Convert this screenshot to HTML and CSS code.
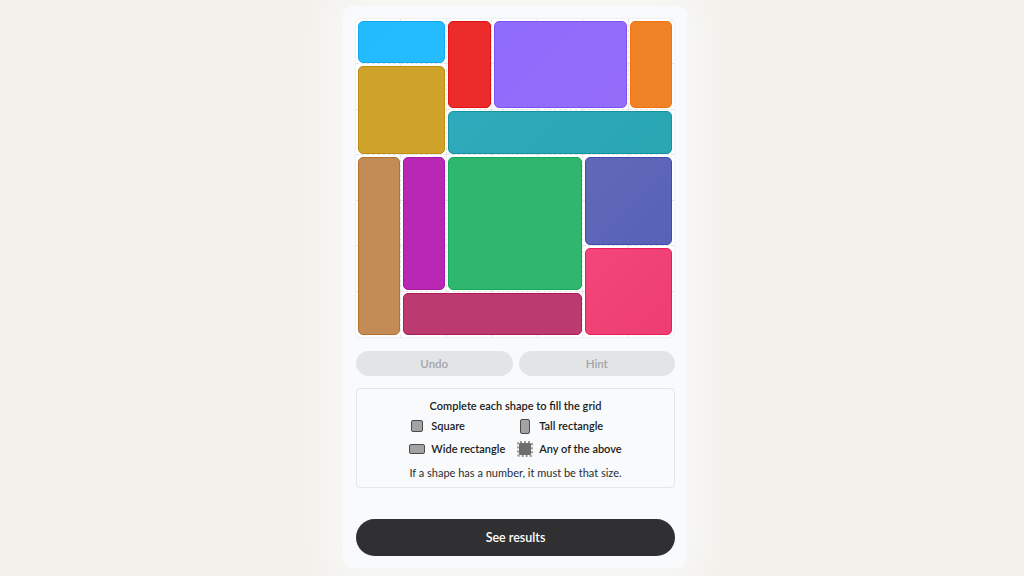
FILE: index.html
```html
<!DOCTYPE html>
<html lang="en">
<head>
<meta charset="utf-8">
<title>Shapes puzzle</title>
<link rel="stylesheet" href="styles.css">
</head>
<body>
<div class="page">
  <main class="card">
    <div class="board">
      <div class="cells">
        <i></i><i></i><i></i><i></i><i></i><i></i><i></i>
        <i></i><i></i><i></i><i></i><i></i><i></i><i></i>
        <i></i><i></i><i></i><i></i><i></i><i></i><i></i>
        <i></i><i></i><i></i><i></i><i></i><i></i><i></i>
        <i></i><i></i><i></i><i></i><i></i><i></i><i></i>
        <i></i><i></i><i></i><i></i><i></i><i></i><i></i>
        <i></i><i></i><i></i><i></i><i></i><i></i><i></i>
      </div>
      <div class="shape s-blue"></div>
      <div class="shape s-red"></div>
      <div class="shape s-purple"></div>
      <div class="shape s-orange"></div>
      <div class="shape s-gold"></div>
      <div class="shape s-teal"></div>
      <div class="shape s-brown"></div>
      <div class="shape s-magenta"></div>
      <div class="shape s-green"></div>
      <div class="shape s-indigo"></div>
      <div class="shape s-pink"></div>
      <div class="shape s-maroon"></div>
    </div>

    <div class="actions">
      <button class="btn-soft">Undo</button>
      <button class="btn-soft">Hint</button>
    </div>

    <section class="legend">
      <h2 class="legend-title">Complete each shape to fill the grid</h2>
      <div class="legend-grid">
        <div class="legend-item"><span class="ico-box"><span class="ico ico-square"></span></span>Square</div>
        <div class="legend-item"><span class="ico-box"><span class="ico ico-tall"></span></span>Tall rectangle</div>
        <div class="legend-item"><span class="ico-box"><span class="ico ico-wide"></span></span>Wide rectangle</div>
        <div class="legend-item"><span class="ico-box"><span class="ico ico-any"></span></span>Any of the above</div>
      </div>
      <p class="legend-note">If a shape has a number, it must be that size.</p>
    </section>

    <button class="btn-primary">See results</button>
  </main>
</div>
</body>
</html>
```

FILE: styles.css
```css
* { box-sizing: border-box; }

html, body {
  margin: 0;
  height: 100%;
}

body {
  background: #f2f1ec;
  font-family: Lato, "Noto Sans", sans-serif;
  color: #1f2328;
}

.page {
  display: flex;
  justify-content: center;
  padding: 6px 0 0 6px;
}

.card {
  width: 344px;
  height: 562px;
  background: #f8fafc;
  border-radius: 9px;
  padding: 13px 12px 12px 13px;
  display: flex;
  flex-direction: column;
  box-shadow: 0 0 40px 14px rgba(255, 255, 255, 0.55);
}

.board {
  width: 318px;
  height: 318px;
  display: grid;
  grid-template-columns: repeat(7, 1fr);
  grid-template-rows: repeat(7, 1fr);
  background: #ffffff;
  border-radius: 5px;
  box-shadow: 0 0 2px rgba(0, 0, 0, 0.14);
}

.cells {
  grid-area: 1 / 1 / 8 / 8;
  display: grid;
  grid-template-columns: repeat(7, 1fr);
  grid-template-rows: repeat(7, 1fr);
}

.cells i {
  border-right: 1px dashed #e3e4e7;
  border-bottom: 1px dashed #e3e4e7;
}

.cells i:nth-child(7n) { border-right: none; }
.cells i:nth-child(n+43) { border-bottom: none; }

.shape {
  margin: 1.5px;
  border-radius: 5px;
  border: 1.5px solid;
  z-index: 1;
}

.s-blue    { grid-area: 1 / 1 / 2 / 3; background: linear-gradient(135deg, #22bbff, #26bcfc); border-color: #14a8f0; }
.s-red     { grid-area: 1 / 3 / 3 / 4; background: #ec2b2b; border-color: #e01010; }
.s-purple  { grid-area: 1 / 4 / 3 / 7; background: linear-gradient(135deg, #906cfd, #946cf8); border-color: #7c52f6; }
.s-orange  { grid-area: 1 / 7 / 3 / 8; background: #f08325; border-color: #f2720e; }
.s-gold    { grid-area: 2 / 1 / 4 / 3; background: #cfa22a; border-color: #c18c14; }
.s-teal    { grid-area: 3 / 3 / 4 / 8; background: linear-gradient(135deg, #2eaabc, #29a6b2); border-color: #14939e; }
.s-brown   { grid-area: 4 / 1 / 8 / 2; background: #c38b56; border-color: #b5722e; }
.s-magenta { grid-area: 4 / 2 / 7 / 3; background: #b828b5; border-color: #a516a6; }
.s-green   { grid-area: 4 / 3 / 7 / 6; background: #2fb86d; border-color: #14a95a; }
.s-indigo  { grid-area: 4 / 6 / 6 / 8; background: linear-gradient(135deg, #6268b9, #5763b6); border-color: #3e4ab0; }
.s-pink    { grid-area: 6 / 6 / 8 / 8; background: linear-gradient(135deg, #f4467a, #ed3d72); border-color: #ec1a5d; }
.s-maroon  { grid-area: 7 / 2 / 8 / 6; background: #bb3a6f; border-color: #ad1c59; }

.actions {
  margin-top: 14px;
  display: flex;
  gap: 6px;
}

.btn-soft {
  flex: 1;
  height: 25px;
  border: none;
  border-radius: 13px;
  background: #e2e4e6;
  color: #a3a6aa;
  font-family: inherit;
  font-size: 11.5px;
  font-weight: 600;
  padding: 0;
}

.legend {
  margin-top: 12px;
  height: 100px;
  border: 1px solid #e3e6ea;
  border-radius: 4px;
  background: #f8fafc;
  display: flex;
  flex-direction: column;
  align-items: center;
  padding-top: 9px;
}

.legend-title {
  margin: 0;
  font-size: 11px;
  font-weight: 600;
  line-height: 16px;
  color: #1a1d21;
}

.legend-grid {
  margin-top: 4px;
  display: grid;
  grid-template-columns: auto auto;
  column-gap: 12px;
  row-gap: 7px;
}

.legend-item {
  display: flex;
  align-items: center;
  gap: 6px;
  font-size: 11px;
  font-weight: 600;
  line-height: 16px;
  color: #1a1d21;
}

.ico-box {
  width: 16px;
  height: 16px;
  display: flex;
  align-items: center;
  justify-content: center;
}

.ico {
  display: block;
  background: #a3a3a3;
  border: 1px solid #4a4a4a;
  border-radius: 2px;
}

.ico-square { width: 12px; height: 12px; }
.ico-tall   { width: 10px; height: 15px; }
.ico-wide   { width: 16px; height: 10px; }
.ico-any    {
  width: 12px;
  height: 12px;
  background: #6e6e6e;
  border: none;
  border-radius: 1px;
  outline: 2px dotted #9a9a9a;
  outline-offset: 0;
}

.legend-note {
  margin: 8px 0 0;
  font-size: 11px;
  line-height: 16px;
  color: #2a2d31;
}

.btn-primary {
  margin-top: 31px;
  height: 37px;
  border: none;
  border-radius: 19px;
  background: #303032;
  color: #ffffff;
  font-family: inherit;
  font-size: 12.5px;
  font-weight: 600;
  padding: 0;
}
```
